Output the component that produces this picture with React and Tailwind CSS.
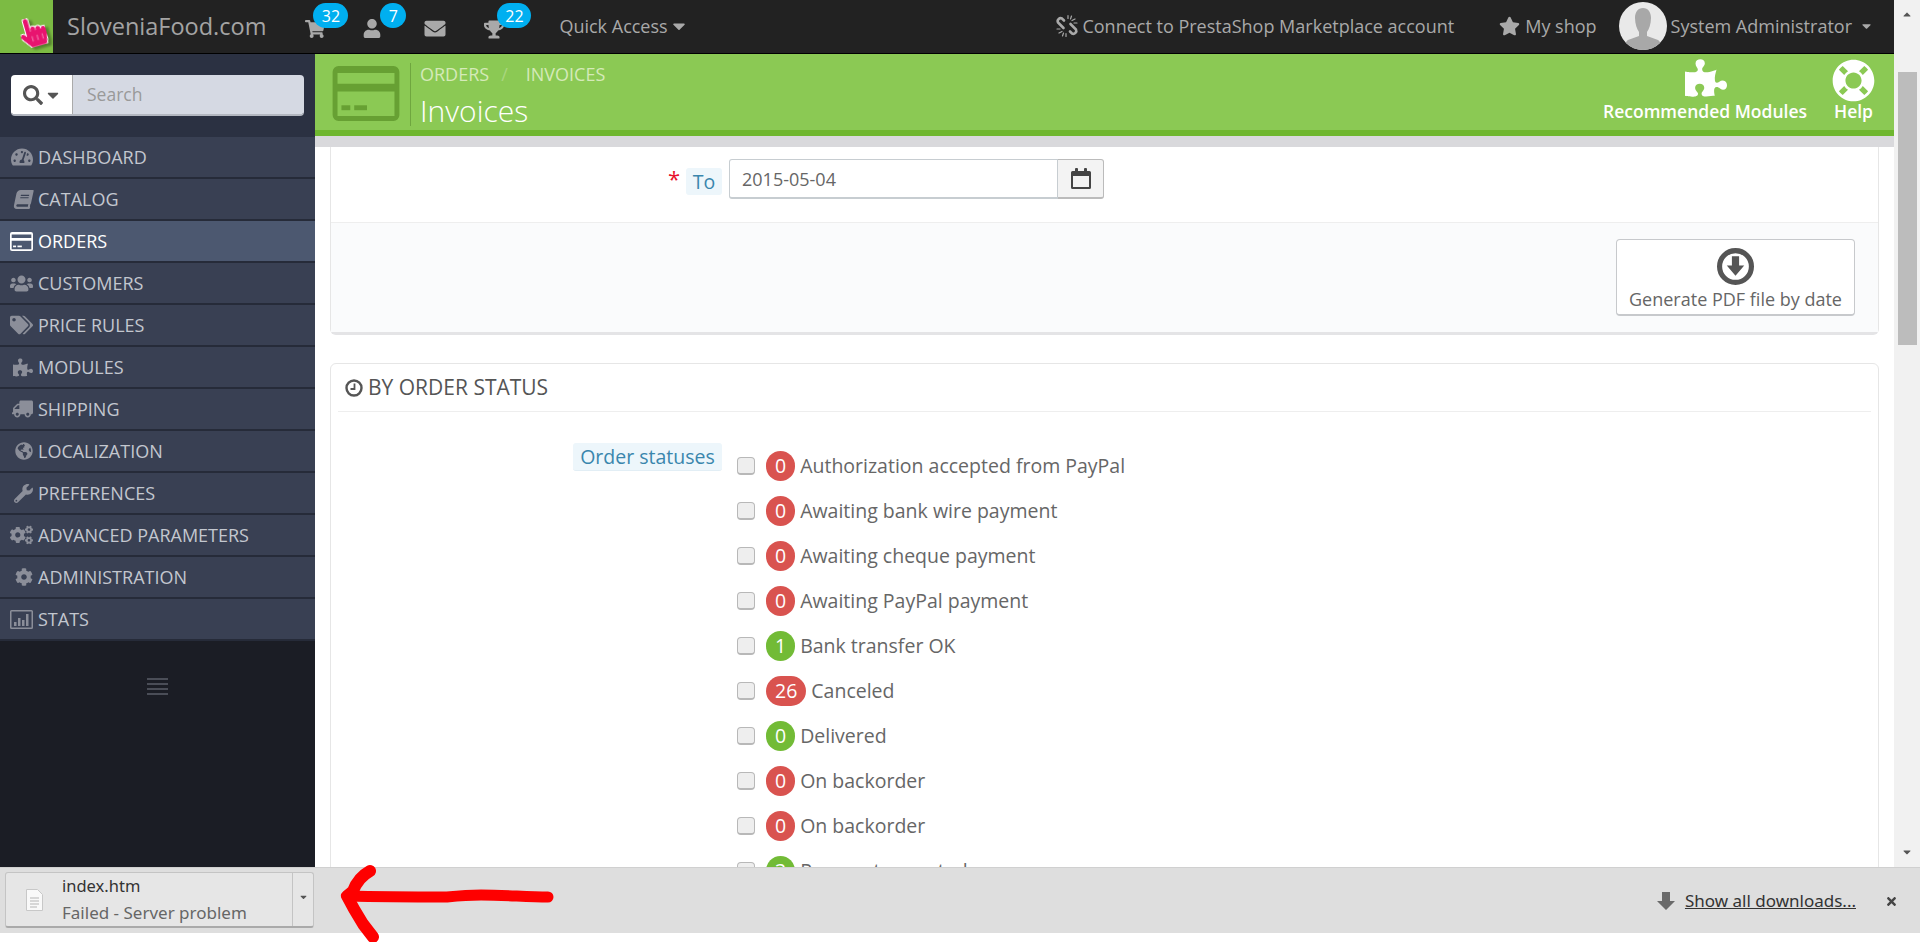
import React from "react";
import { FaTachometerAlt, FaBook, FaUsers, FaTags, FaPuzzlePiece, FaTruck, FaGlobeAmericas, FaWrench, FaCogs, FaCog, FaShoppingCart, FaUser, FaEnvelope, FaTrophy, FaStar, FaSearch, FaCaretDown, FaLifeRing, FaHandPointer, FaTimes } from "react-icons/fa";

function CardIcon({ className }) {
  return (
    <svg viewBox="0 0 68 56" className={className} fill="currentColor">
      <path fillRule="evenodd" d="M6 0h56a6 6 0 0 1 6 6v44a6 6 0 0 1-6 6H6a6 6 0 0 1-6-6V6a6 6 0 0 1 6-6zM5 7v11h58V7zM5 26v25h58V26z" />
      <rect x="9" y="40" width="9" height="5" />
      <rect x="22" y="40" width="13" height="5" />
    </svg>
  );
}

function StatsIcon({ className }) {
  return (
    <svg viewBox="0 0 23 19" className={className} fill="currentColor">
      <path fillRule="evenodd" d="M1.5 0h20A1.5 1.5 0 0 1 23 1.5v16a1.5 1.5 0 0 1-1.5 1.5h-20A1.5 1.5 0 0 1 0 17.5v-16A1.5 1.5 0 0 1 1.5 0zM1.5 1.5v16h20v-16z" />
      <rect x="4" y="12" width="2.5" height="4" />
      <rect x="8" y="8" width="2.5" height="8" />
      <rect x="12" y="10" width="2.5" height="6" />
      <rect x="16" y="4" width="2.5" height="12" />
    </svg>
  );
}

function ChainIcon({ className }) {
  return (
    <svg viewBox="0 0 24 24" className={className} fill="none" stroke="currentColor" strokeLinecap="round">
      <path strokeWidth="2.6" d="M9 6.5 7 4.5a3 3 0 0 0-4 4l5.5 5.5" />
      <path strokeWidth="2.6" d="M15 17.5l2 2a3 3 0 0 0 4-4L15.5 10" />
      <path strokeWidth="1.2" d="M13 1.5v3M16.5 2l-1 3M20 5l-3 1.5M22 9h-3M11 22.5v-3M7.5 22l1-3M4 19l3-1.5M2 15h3" />
    </svg>
  );
}

function Badge({ children, className }) {
  return (
    <span className={"absolute flex h-[25px] items-center justify-center rounded-full bg-[#00aff0] text-[16px] text-white " + className}>
      {children}
    </span>
  );
}

const menu = [
  [FaTachometerAlt, "DASHBOARD", "w-[22px] h-[20px]"],
  [FaBook, "CATALOG", "w-[19px] h-[19px] -skew-x-12"],
  [CardIcon, "ORDERS", "h-[19px] w-[23px]"],
  [FaUsers, "CUSTOMERS", "w-[23px] h-[21px]"],
  [FaTags, "PRICE RULES", "w-[23px] h-[20px]"],
  [FaPuzzlePiece, "MODULES", "w-[20px] h-[19px]"],
  [FaTruck, "SHIPPING", "w-[21px] h-[18px] -scale-x-100"],
  [FaGlobeAmericas, "LOCALIZATION", "w-[18px] h-[18px]"],
  [FaWrench, "PREFERENCES", "w-[19px] h-[19px]"],
  [FaCogs, "ADVANCED PARAMETERS", "w-[23px] h-[20px]"],
  [FaCog, "ADMINISTRATION", "w-[18px] h-[18px]"],
  [StatsIcon, "STATS", "w-[23px] h-[19px]"],
];

const rows = [
  ["0", "r", "Authorization accepted from PayPal"],
  ["0", "r", "Awaiting bank wire payment"],
  ["0", "r", "Awaiting cheque payment"],
  ["0", "r", "Awaiting PayPal payment"],
  ["1", "g", "Bank transfer OK"],
  ["26", "r", "Canceled"],
  ["0", "g", "Delivered"],
  ["0", "r", "On backorder"],
  ["0", "r", "On backorder"],
  ["3", "g", "Payment accepted"],
];

export default function App() {
  return (
    <div className="relative flex h-[942px] w-[1920px] flex-col overflow-hidden bg-white font-['Open_Sans',sans-serif] text-[#666]">
      <div className="flex h-[867px] shrink-0">
        <div className="flex w-[1894px] flex-col">
          {/* top bar */}
          <header className="flex h-[54px] shrink-0 items-stretch border-b border-black bg-[#222] text-[18px] text-[#a9a9a9]">
            <div className="flex w-[53px] items-center justify-center bg-[#7cbb43] pl-[13px] pt-[11px]">
              <FaHandPointer
                className="h-[30px] w-[26px] -rotate-[16deg] text-[#e8146f] drop-shadow-[3px_3px_1px_rgba(0,0,0,0.3)] [paint-order:stroke]"
                stroke="#ffffff"
                strokeWidth="36"
              />
            </div>
            <span className="ml-[14px] self-center text-[23.5px] leading-none text-[#a4a4a4]">SloveniaFood.com</span>
            <div className="relative w-[293px]">
              <FaShoppingCart className="absolute left-[39px] top-[20px] h-[18px] w-[20px]" />
              <Badge className="left-[47px] top-[3px] w-[35px]">32</Badge>
              <FaUser className="absolute left-[97px] top-[19px] h-[19px] w-[18px]" />
              <Badge className="left-[114px] top-[3px] w-[26px]">7</Badge>
              <FaEnvelope className="absolute left-[157px] top-[18px] h-[21px] w-[24px]" />
              <FaTrophy className="absolute left-[218px] top-[20px] h-[19px] w-[20px]" />
              <Badge className="left-[231px] top-[3px] w-[34px]">22</Badge>
            </div>
            <div className="flex items-center gap-[4px] pb-[1px]">
              <span>Quick Access</span>
              <FaCaretDown className="h-[20px] w-[14px]" />
            </div>
            <div className="ml-auto flex items-center pb-[1px]">
              <ChainIcon className="mr-[3px] h-[24px] w-[24px]" />
              <span>Connect to PrestaShop Marketplace account</span>
              <FaStar className="ml-[45px] mr-[5px] h-[20px] w-[21px]" />
              <span>My shop</span>
              <div className="relative ml-[22px] h-[48px] w-[48px] overflow-hidden rounded-full bg-[#e9e9e9]">
                <svg viewBox="0 0 48 48" className="h-full w-full" fill="#a8a8a8">
                  <path d="M24 6c5 0 8 4 8 10 0 6-2 11-4 14v4l11 4c2 1 3 4 3 10H6c0-6 1-9 3-10l11-4v-4c-2-3-4-8-4-14 0-6 3-10 8-10z" />
                </svg>
              </div>
              <span className="ml-[4px]">System Administrator</span>
              <FaCaretDown className="ml-[9px] mr-[22px] h-[14px] w-[11px]" />
            </div>
          </header>
          <div className="flex min-h-0 flex-1">
            {/* sidebar */}
            <aside className="flex w-[315px] shrink-0 flex-col bg-[#1b1d25]">
              <div className="h-[83px] shrink-0 bg-[#2b3142] pl-[11px] pt-[21px]">
                <div className="flex h-[41px] w-[293px] overflow-hidden rounded-[4px] border-b-2 border-[#b3b7c0]">
                  <div className="flex w-[62px] items-center justify-center gap-[3px] border-r border-[#aaa] bg-white text-[#555]">
                    <FaSearch className="h-[20px] w-[20px]" />
                    <FaCaretDown className="h-[18px] w-[14px]" />
                  </div>
                  <div className="flex flex-1 items-center bg-[#d5d9e3] pl-[14px] text-[17.5px] text-[#999]">Search</div>
                </div>
              </div>
              {menu.map(([Icon, label, cls]) => {
                const active = label === "ORDERS";
                return (
                  <div key={label} className={"flex h-[42px] shrink-0 items-center border-b-2 border-[#262b39] text-[18px] " + (active ? "bg-[#4c5870] text-white" : "bg-[#394053] text-[#c3c7cf]")}>
                    <span className={"flex w-[38px] shrink-0 items-center justify-end pr-[5px] " + (active ? "text-white" : "text-[#8b8e99]")}>
                      <Icon className={cls} />
                    </span>
                    <span>{label}</span>
                  </div>
                );
              })}
              <div className="ml-[147px] mt-[37px] flex w-[21px] flex-col gap-[3px]">
                <div className="h-[2px] bg-[#4a4d57]" />
                <div className="h-[2px] bg-[#4a4d57]" />
                <div className="h-[2px] bg-[#4a4d57]" />
                <div className="h-[2px] bg-[#4a4d57]" />
              </div>
            </aside>
            {/* content column */}
            <main className="flex min-w-0 flex-1 flex-col overflow-hidden">
              <div className="flex h-[82px] shrink-0 border-b-[6px] border-[#6fb72f] bg-[#8bc954] text-white">
                <CardIcon className="ml-[17px] mt-[12px] h-[55px] w-[68px] text-[#67a033]" />
                <div className="ml-[10px] mt-[9px] h-[63px] border-l border-[#6fa63f] pl-[9px]">
                  <div className="-mt-[1px] flex h-[24px] items-center text-[18px] text-[#d5eab9]">
                    <span>ORDERS</span>
                    <span className="ml-[12px] text-[#a9d67f]">/</span>
                    <span className="ml-[18px]">INVOICES</span>
                  </div>
                  <div className="mt-[5px] text-[30px] font-light leading-[40px]">Invoices</div>
                </div>
                <div className="ml-auto flex items-start pr-[19px] pt-[5px] text-[17.5px] font-semibold leading-none">
                  <div className="flex flex-col items-center">
                    <FaPuzzlePiece className="ml-[2px] h-[38px] w-[42px]" />
                    <span className="mt-[6px]">Recommended Modules</span>
                  </div>
                  <div className="ml-[25px] flex flex-col items-center">
                    <FaLifeRing className="h-[43px] w-[43px]" />
                    <span className="mt-[1px]">Help</span>
                  </div>
                </div>
              </div>
              <div className="h-[11px] shrink-0 bg-[#d9d9dc]" />
              <div className="pl-[15px] pr-[15px] text-[19.5px]">
                {/* first panel */}
                <section className="rounded-b-[6px] border-x border-b-[3px] border-x-[#e6e6e6] border-b-[#e4e4e6]">
                  <div className="flex h-[76px] items-start border-b border-[#eee] pt-[12px]">
                    <div className="flex w-[399px] items-start justify-end pr-[8px]">
                      <span className="mr-[6px] mt-[8px] text-[22px] leading-[22px] text-[#e8112d]">*</span>
                      <span className="mt-[9px] flex h-[27px] w-[36px] items-center justify-center rounded-[3px] bg-[#edf6fb] text-[#3a86ad]">To</span>
                    </div>
                    <div className="-ml-[1px] flex h-[40px] w-[375px]">
                      <div className="flex w-[329px] items-center rounded-l-[3px] border border-b-2 border-[#c7cdd1] pl-[12px] pt-[1px] text-[18px] text-[#666]">2015-05-04</div>
                      <div className="flex w-[46px] items-center justify-center rounded-r-[3px] border border-b-2 border-l-0 border-[#bbb] bg-[#f3f3f3] text-[#444]">
                        <svg viewBox="0 0 20 21" className="h-[21px] w-[20px]" fill="currentColor">
                          <path fillRule="evenodd" d="M1.5 3H4V1a1 1 0 0 1 1-1h1a1 1 0 0 1 1 1v2h6V1a1 1 0 0 1 1-1h1a1 1 0 0 1 1 1v2h2.5A1.5 1.5 0 0 1 20 4.500v15a1.500 1.500 0 0 1-1.500 1.500h-17A1.500 1.500 0 0 1 0 19.500v-15A1.500 1.500 0 0 1 1.500 3zM2 8v11h16V8z" />
                        </svg>
                      </div>
                    </div>
                  </div>
                  <div className="flex h-[109px] justify-end bg-[#fafbfc] pr-[23px] pt-[16px]">
                    <button className="flex h-[77px] w-[239px] flex-col items-center rounded-[4px] border border-b-2 border-[#c7c9cc] bg-white pt-[8px] text-[18px] text-[#666]">
                      <svg viewBox="0 0 36 36" className="h-[37px] w-[37px] text-[#555]">
                        <circle cx="18" cy="18" r="15.500" fill="none" stroke="currentColor" strokeWidth="5" />
                        <path d="M14.500 8h7v9h5L18 27 9.500 17h5z" fill="currentColor" />
                      </svg>
                      <span className="mt-[2px] leading-[24px]">Generate PDF file by date</span>
                    </button>
                  </div>
                </section>
                {/* second panel */}
                <section className="mt-[28px] rounded-t-[6px] border border-[#e6e6e6]">
                  <div className="mx-[7px] flex h-[48px] items-center border-b border-[#eee] pl-[7px] text-[#555]">
                    <svg viewBox="0 0 18 18" className="h-[18px] w-[18px]" fill="none" stroke="currentColor">
                      <circle cx="9" cy="9" r="7.500" strokeWidth="2.400" />
                      <path d="M9.500 4.500V10H5.500" strokeWidth="1.800" />
                    </svg>
                    <span className="ml-[5px] text-[21px]">BY ORDER STATUS</span>
                  </div>
                  <div className="flex pt-[31px]">
                    <div className="w-[399px] pr-[8px]">
                      <div className="ml-auto flex h-[28px] w-[149px] items-center justify-center rounded-[3px] border-b border-[#e2eef5] bg-[#edf6fb] text-[#3a86ad]">Order statuses</div>
                    </div>
                    <div className="ml-[7px] flex flex-col">
                      {rows.map(([n, c, label], i) => (
                        <div key={i} className="flex h-[45px] items-center">
                          <span className="h-[18px] w-[18px] rounded-[4px] border border-b-2 border-[#b8b8b8] bg-[#eeeeee]" />
                          <span className={"ml-[11px] flex h-[30px] min-w-[29px] items-center justify-center rounded-full px-[9px] text-[19.5px] text-white " + (c === "r" ? "bg-[#d9534f]" : "bg-[#72bb36]")}>{n}</span>
                          <span className="ml-[5px] text-[#666]">{label}</span>
                        </div>
                      ))}
                    </div>
                  </div>
                </section>
              </div>
            </main>
          </div>
        </div>
        {/* page scrollbar */}
        <div className="flex w-[26px] shrink-0 flex-col items-center bg-[#f1f1f1]">
          <FaCaretDown className="mt-[9px] h-[12px] w-[12px] rotate-180 text-[#555]" />
          <div className="ml-[1px] mt-[51px] h-[273px] w-[19px] bg-[#bcbcbc]" />
          <FaCaretDown className="mt-auto mb-[9px] h-[12px] w-[12px] text-[#555]" />
        </div>
      </div>
      {/* download shelf */}
      <footer className="relative flex h-[66px] shrink-0 items-start border-t border-[#d0d0d0] bg-[#dedede] font-['Noto_Sans',sans-serif]">
        <div className="ml-[5px] mt-[4px] flex h-[56px] w-[309px] rounded-[3px] border border-b-2 border-[#c4c4c4] border-b-[#aaa] bg-[#e6e6e6]">
          <div className="flex w-[56px] items-center justify-center">
            <svg viewBox="0 0 17 22" className="h-[22px] w-[17px]">
              <path d="M.5.5h11l5 5v16H.5z" fill="#f9f9f9" stroke="#c8c8c8" />
              <path d="M4 9h9M4 12h9M4 15h9M4 18h7" stroke="#b5b5b5" />
            </svg>
          </div>
          <div className="-mt-[1px] flex-1 leading-[27px]">
            <div className="text-[16.5px] text-[#333]">index.htm</div>
            <div className="text-[17px] text-[#666]">Failed - Server problem</div>
          </div>
          <div className="flex w-[21px] items-center justify-center border-l border-[#c4c4c4] pb-[6px]">
            <FaCaretDown className="h-[10px] w-[9px] text-[#555]" />
          </div>
        </div>
        <div className="ml-auto mt-[21px] flex items-center">
          <svg viewBox="0 0 18 18" className="h-[18px] w-[18px] text-[#6a6a6a]" fill="currentColor">
            <path d="M5 0h8v9h5l-9 9-9-9h5z" />
          </svg>
          <span className="ml-[10px] text-[17px] leading-[24px] text-[#333] underline">Show all downloads...</span>
          <FaTimes className="ml-[29px] mr-[22px] h-[13px] w-[13px] text-[#444]" />
        </div>
      </footer>
      <div className="h-[9px] shrink-0 bg-white" />
      {/* red hand-drawn annotation */}
      <svg className="pointer-events-none absolute left-0 top-0 h-[942px] w-[1920px]" viewBox="0 0 1920 942" fill="none" stroke="#fe0000" strokeWidth="12" strokeLinecap="round" strokeLinejoin="round">
        <path d="M370 871c-9 5-14 12-17 20l-6 5 7 13 9 15 10 13" />
        <path d="M347 896c40 1 70 1 100 1 10-1 20-2 34-2 25 0 45 2 67 2" strokeWidth="11" />
      </svg>
    </div>
  );
}
